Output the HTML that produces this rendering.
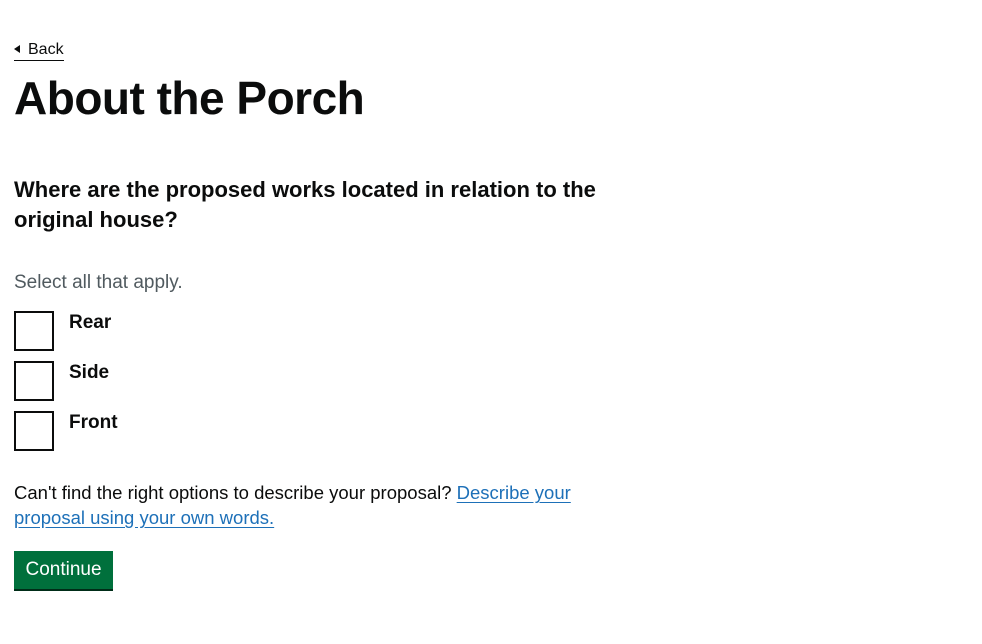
<!DOCTYPE html>
<html><head><meta charset="utf-8"><style>
body{margin:0;width:982px;height:644px;background:#fff;font-family:"Liberation Sans",Arial,sans-serif;color:#0b0c0c;position:relative;overflow:hidden}
.a{position:absolute;white-space:nowrap}
.back{left:14px;top:40px;font-size:16px;line-height:20px;padding-left:14px;border-bottom:1px solid #0b0c0c;padding-bottom:0px}
.back:before{content:"";position:absolute;left:0;top:5px;border-style:solid;border-width:4px 6px 4px 0;border-color:transparent #0b0c0c transparent transparent}
h1{margin:0;left:14px;top:70px;font-size:46px;line-height:56px;font-weight:bold;letter-spacing:-0.5px}
.q{left:14px;top:175px;font-size:22px;line-height:30px;font-weight:bold;white-space:normal;width:640px}
.hint{left:14px;top:272px;font-size:19px;color:#505a5f}
.cb{left:14px;width:36px;height:36px;border:2px solid #0b0c0c}
.lb{left:69px;font-size:19px;font-weight:bold}
.p{left:14px;top:480px;font-size:18.5px;line-height:25px;white-space:normal;width:600px}
.p a{color:#1d70b8;text-decoration:underline;text-underline-offset:3px}
.btn{left:14px;top:551px;width:99px;height:38px;background:#00703c;box-shadow:0 2px 0 #002d18;color:#fff;font-size:19px;line-height:38px;text-align:center}
</style></head><body>
<div class="a back">Back</div>
<h1 class="a">About the Porch</h1>
<div class="a q">Where are the proposed works located in relation to the original house?</div>
<div class="a hint">Select all that apply.</div>
<div class="a cb" style="top:311px"></div><div class="a lb" style="top:312px">Rear</div>
<div class="a cb" style="top:361px"></div><div class="a lb" style="top:362px">Side</div>
<div class="a cb" style="top:411px"></div><div class="a lb" style="top:412px">Front</div>
<div class="a p">Can't find the right options to describe your proposal? <a>Describe your<br>proposal using your own words.</a></div>
<div class="a btn">Continue</div>
</body></html>
